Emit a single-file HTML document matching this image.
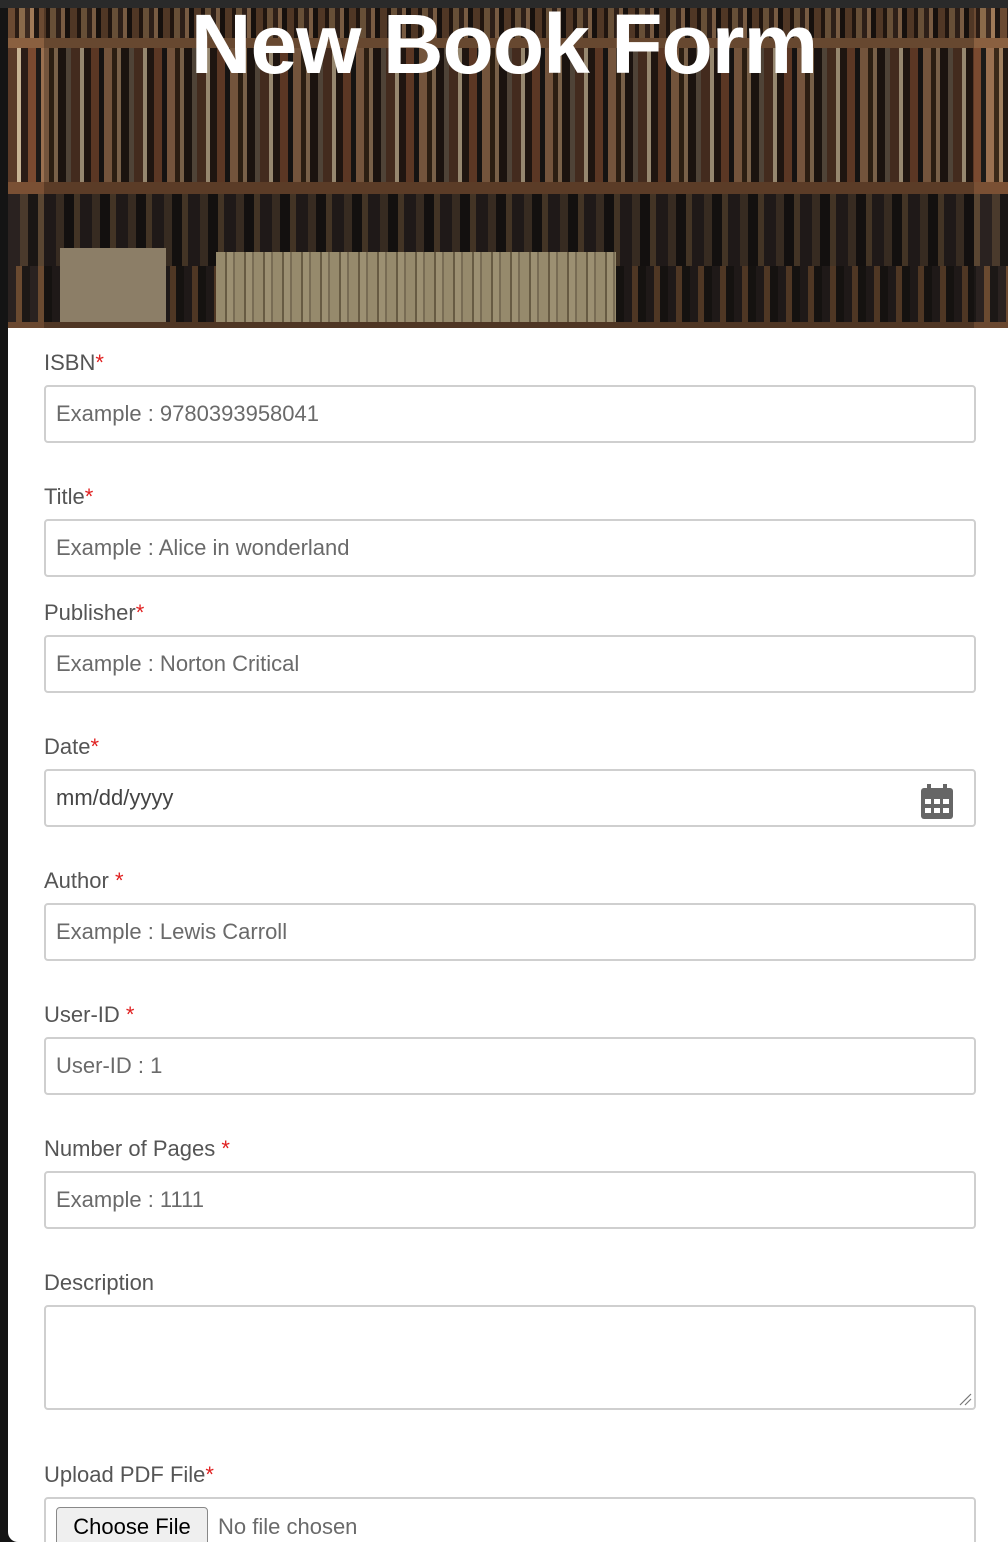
<!DOCTYPE html>
<html><head><meta charset="utf-8"><style>
*{box-sizing:border-box;margin:0;padding:0}
html{width:1008px;height:1542px;overflow:hidden}
body{width:1008px;height:1542px;background:#141414;position:relative;overflow:hidden;font-family:"Liberation Sans",Arial,sans-serif}
.topbar{position:absolute;left:0;top:0;width:1008px;height:8px;background:#2a2a2a}
.card{position:absolute;left:8px;top:8px;width:1000px;height:1534px;background:#fff;border-radius:0 0 0 10px;overflow:hidden}
.hero{position:absolute;left:0;top:0;width:1000px;height:320px;background:#3a2a1c;overflow:hidden}
.row{position:absolute;left:0;width:1000px}
.r1{top:0;height:30px;background:repeating-linear-gradient(90deg,#6b4a32 0 7px,#2b1c14 7px 11px,#8a6a4a 11px 17px,#3c2a20 17px 22px,#a07a58 22px 26px,#1e1612 26px 31px)}
.s1{top:30px;height:10px;background:#8a6040}
.r2{top:40px;height:134px;background:repeating-linear-gradient(90deg,#5a3a28 0 9px,#c8b494 9px 13px,#2a1c16 13px 20px,#7a4a30 20px 28px,#1c1a18 28px 33px,#9a7050 33px 41px,#3a2818 41px 46px,#a08060 46px 50px,#241a14 50px 58px,#6a5a4a 58px 63px)}
.s2{top:174px;height:12px;background:#7a5034}
.r3{top:186px;height:72px;background:repeating-linear-gradient(90deg,#2a2220 0 12px,#4a3a2c 12px 20px,#1a1614 20px 30px,#5a4632 30px 36px)}
.r4{top:258px;height:64px;background:repeating-linear-gradient(90deg,#2a2220 0 8px,#6a4a30 8px 14px,#1c1816 14px 22px)}
.light{position:absolute;top:244px;left:208px;width:400px;height:76px;background:repeating-linear-gradient(90deg,#c8b890 0 9px,#8a7a5a 9px 11px,#d0c098 11px 17px,#a09070 17px 19px)}
.box{position:absolute;top:240px;left:52px;width:106px;height:80px;background:#bba98a}
.s3{top:314px;height:6px;background:#6a4830}
.shade{position:absolute;left:36px;top:0;width:930px;height:320px;background:rgba(0,0,0,.25)}
h1{position:absolute;left:0;width:1008px;top:2px;text-align:center;color:#fff;font-size:84px;font-weight:bold;letter-spacing:-1px;line-height:1}
label{position:absolute;left:44px;font-size:22px;color:#555;line-height:26px}
label b{color:#e02020;font-weight:normal}
.in{position:absolute;left:44px;width:932px;height:58px;border:2px solid #cfcfcf;border-radius:4px;background:#fff;font-size:22px;color:#6a6a6a;padding-left:10px;line-height:54px}
.btn{position:absolute;left:10px;top:8px;width:152px;height:40px;border:1px solid #888;border-radius:4px;background:#efefef;color:#000;font-size:22px;line-height:38px;text-align:center}
</style></head><body>
<div class="topbar"></div>
<div class="card">
<div class="hero">
<div class="row r1"></div><div class="row s1"></div><div class="row r2"></div><div class="row s2"></div><div class="row r3"></div><div class="row r4"></div><div class="light"></div><div class="box"></div><div class="row s3"></div>
<div class="shade"></div>
</div>
</div>
<h1>New Book Form</h1>
<label style="top:350px">ISBN<b>*</b></label>
<div class="in" style="top:385px">Example : 9780393958041</div>
<label style="top:484px">Title<b>*</b></label>
<div class="in" style="top:519px">Example : Alice in wonderland</div>
<label style="top:600px">Publisher<b>*</b></label>
<div class="in" style="top:635px">Example : Norton Critical</div>
<label style="top:734px">Date<b>*</b></label>
<div class="in" style="top:769px;color:#444">mm/dd/yyyy
<svg style="position:absolute;right:20px;top:13px" width="34" height="36" viewBox="0 0 34 36"><rect x="7" y="0" width="4" height="7" fill="#666"/><rect x="23" y="0" width="4" height="7" fill="#666"/><rect x="1" y="4" width="32" height="31" rx="3" fill="#666"/><g fill="#fff"><rect x="5" y="15" width="6" height="5"/><rect x="14" y="15" width="6" height="5"/><rect x="23" y="15" width="6" height="5"/><rect x="5" y="24" width="6" height="5"/><rect x="14" y="24" width="6" height="5"/><rect x="23" y="24" width="6" height="5"/></g></svg></div>
<label style="top:868px">Author <b>*</b></label>
<div class="in" style="top:903px">Example : Lewis Carroll</div>
<label style="top:1002px">User-ID <b>*</b></label>
<div class="in" style="top:1037px">User-ID : 1</div>
<label style="top:1136px">Number of Pages <b>*</b></label>
<div class="in" style="top:1171px">Example : 1111</div>
<label style="top:1270px">Description</label>
<div class="in" style="top:1305px;height:105px"><svg style="position:absolute;right:2px;bottom:2px" width="14" height="14"><path d="M2 13L13 2M7 13L13 7" stroke="#777" stroke-width="1.2"/></svg></div>
<label style="top:1462px">Upload PDF File<b>*</b></label>
<div class="in" style="top:1497px;height:70px;padding-left:172px;line-height:56px">No file chosen<div class="btn">Choose File</div></div>
</body></html>
